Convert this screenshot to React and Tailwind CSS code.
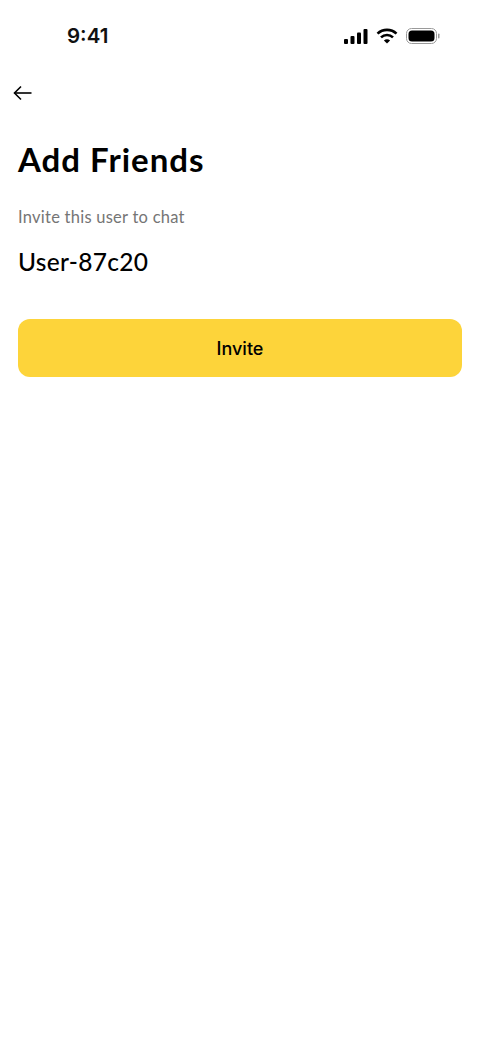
function StatusBar() {
    return (
        <div className="flex items-center justify-between h-[36px] mt-[18px] pl-[67px] pr-[40px]">
            <span className="text-[20.5px] leading-[36px] font-semibold text-[#111] font-['Inter',sans-serif]">9:41</span>
            <div className="flex items-center">
                <svg width="24" height="15" viewBox="0 0 24 15" fill="#000">
                    <rect x="0" y="10" width="4" height="5" rx="1" />
                    <rect x="6.5" y="7" width="4" height="8" rx="1" />
                    <rect x="13" y="3.5" width="4" height="11.5" rx="1" />
                    <rect x="19.5" y="0" width="4" height="15" rx="1" />
                </svg>
                <svg width="22" height="16" viewBox="0 0 22 16" fill="none" stroke="#000" strokeWidth="2.6" className="ml-[8px]">
                    <path d="M1.5 5.6C6.8 0.6 15.2 0.6 20.5 5.6" />
                    <path d="M5 9.4C8.4 6.2 13.6 6.2 17 9.4" />
                    <path d="M11 15.6L7.9 12.4C9.7 10.8 12.3 10.8 14.1 12.4Z" fill="#000" stroke="none" />
                </svg>
                <svg width="34" height="16" viewBox="0 0 34 16" className="ml-[8px]">
                    <rect x="0.5" y="0.5" width="30" height="15" rx="5" fill="none" stroke="#9a9a9a" />
                    <rect x="2.5" y="2.5" width="26" height="11" rx="3.5" fill="#000" />
                    <rect x="32" y="5.5" width="1.5" height="5" rx="0.75" fill="#9a9a9a" />
                </svg>
            </div>
        </div>
    );
}

export default function App() {
    return (
        <div className="min-h-[1040px] bg-white flex flex-col font-['Lato','Liberation_Sans',sans-serif]">
            <StatusBar />
            <button className="mt-[31px] ml-[13px] w-[19px] h-[16px] flex items-center" aria-label="Back">
                <svg width="19" height="16" viewBox="0 0 19 16" fill="none" stroke="#000" strokeWidth="1.6">
                    <path d="M18.5 8H1.5" />
                    <path d="M8 1.5L1.5 8L8 14.5" />
                </svg>
            </button>
            <div className="flex flex-col px-[18px]">
                <h1 className="mt-[38px] text-[33px] leading-[40px] font-bold tracking-[1px] text-black">Add Friends</h1>
                <p className="mt-[27px] text-[16.5px] leading-[22px] tracking-[0.25px] text-[#757575]">Invite this user to chat</p>
                <p className="mt-[18px] text-[24.5px] leading-[32px] font-medium tracking-[0.3px] text-black">User-87c20</p>
                <button className="mt-[41px] h-[58px] rounded-[12px] bg-[#fdd43a] text-[18px] font-medium text-black font-['Inter',sans-serif]">Invite</button>
            </div>
        </div>
    );
}
